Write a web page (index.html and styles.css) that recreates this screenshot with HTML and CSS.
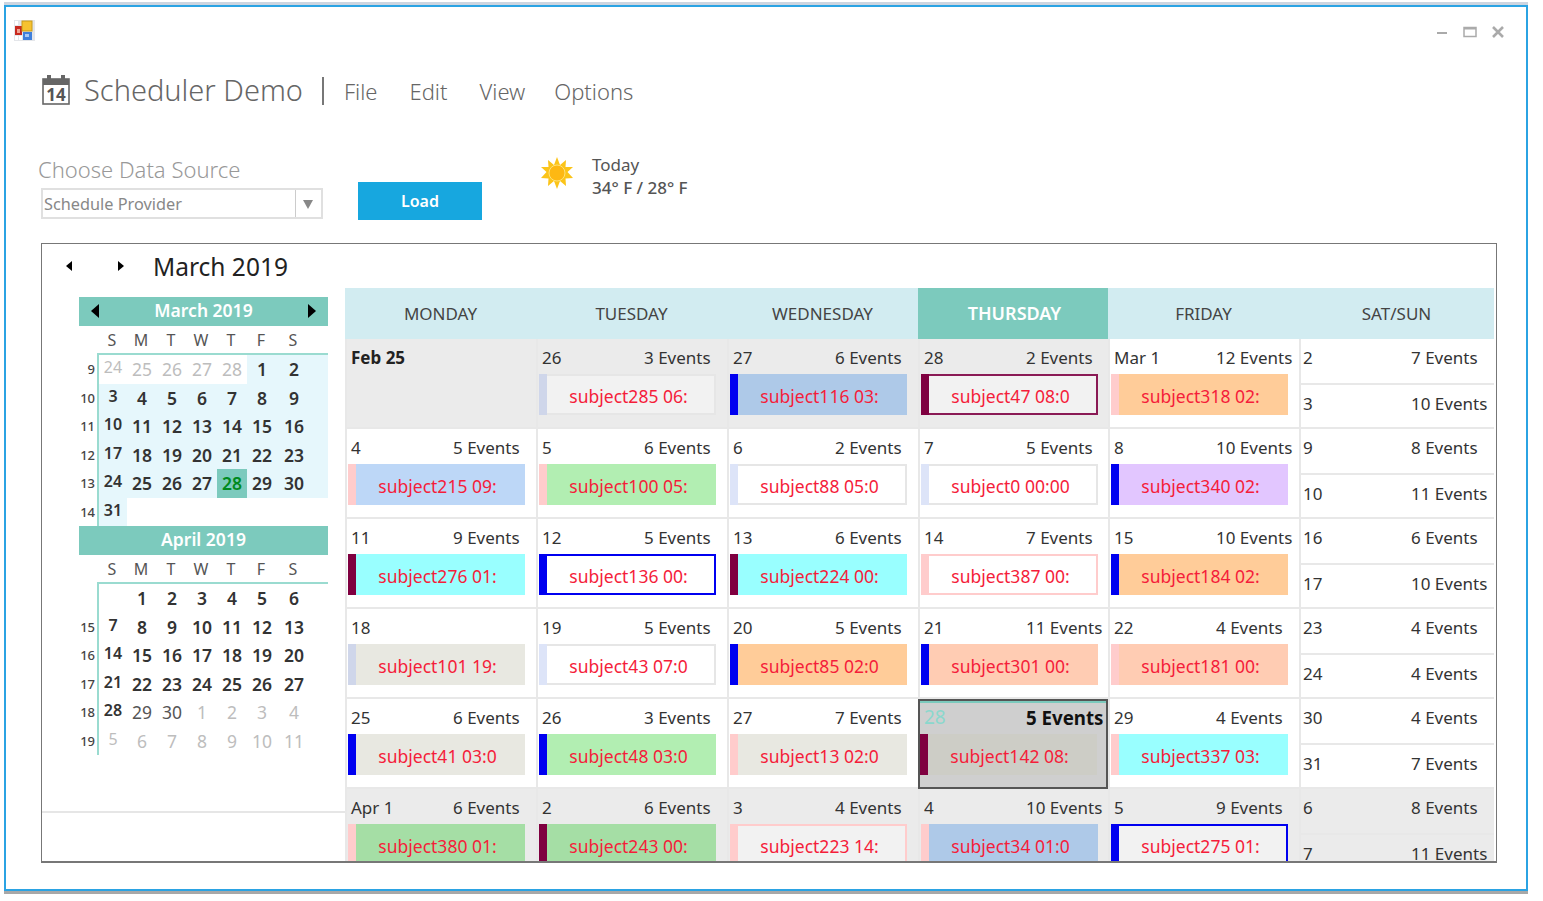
FILE: index.html
```html
<!DOCTYPE html>
<html lang="en">
<head>
  <meta charset="UTF-8" />
  <title>Scheduler Demo</title>
  <link rel="stylesheet" href="styles.css">
</head>
<body>
  <div class="frame">
    <div class="window">
      <div class="titlebar">
        <svg class="app-icon" width="21" height="21" viewBox="0 0 21 21">
          <rect width="21" height="21" fill="#e4e6ea"/>
          <rect x="1" y="6" width="7" height="9" fill="#c8281e"/>
          <rect x="3" y="9" width="3" height="4" fill="#f0a090"/>
          <rect x="8" y="1" width="10" height="10" fill="#f6c230" stroke="#c89a18"/>
          <rect x="9" y="12" width="9" height="8" fill="#3f7fdc"/>
          <rect x="11" y="14" width="4" height="3" fill="#a8c8f4"/>
          <rect x="1" y="16" width="3" height="4" fill="#fff"/>
          <rect x="5" y="16" width="3" height="4" fill="#fff"/>
          <rect x="1" y="1" width="3" height="4" fill="#fff"/>
        </svg>
        <div class="win-controls">
          <svg width="12" height="12" viewBox="0 0 12 12"><rect x="1" y="6" width="10" height="2" fill="#aaa"/></svg>
          <svg width="14" height="12" viewBox="0 0 14 12"><rect x="1" y="1.5" width="12" height="9" fill="none" stroke="#aaa" stroke-width="1.5"/><rect x="1" y="1" width="12" height="2.5" fill="#aaa"/></svg>
          <svg width="12" height="12" viewBox="0 0 12 12"><path d="M1 1 L11 11 M11 1 L1 11" stroke="#aaa" stroke-width="2.6"/></svg>
        </div>
      </div>

      <div class="app-head">
        <svg class="cal-icon" width="28" height="30" viewBox="0 0 28 30">
          <rect x="1" y="4" width="26" height="25" fill="#fff" stroke="#666" stroke-width="1.6"/>
          <rect x="1" y="4" width="26" height="6" fill="#666"/>
          <rect x="5" y="0" width="4" height="7" fill="#666"/>
          <rect x="19" y="0" width="4" height="7" fill="#666"/>
          <text x="14" y="26" text-anchor="middle" class="cal-num">14</text>
        </svg>
        <span class="app-title">Scheduler Demo</span>
        <span class="head-sep"></span>
        <nav class="menu">
          <a>File</a>
          <a>Edit</a>
          <a>View</a>
          <a>Options</a>
        </nav>
      </div>

      <div class="source-row">
        <div class="source">
          <label class="source-label">Choose Data Source</label>
          <div class="combo">
            <span class="combo-text">Schedule Provider</span>
            <span class="combo-arrow"></span>
          </div>
        </div>
        <button class="load">Load</button>
        <svg class="sun" width="32" height="32" viewBox="0 0 32 32">
          <path d="M16 0 L19 8 L25 3 L24.500 10 L32 10 L26.500 15 L32 21 L24.500 21.500 L25 29 L19 24 L16 32 L13 24 L7 29 L7.500 21.500 L0 21 L5.500 15 L0 10 L7.500 10 L7 3 L13 8 Z" fill="#fbc419"/>
          <circle cx="16" cy="16" r="8" fill="#fdb813" stroke="#ffe27a"/>
        </svg>
        <div class="weather">
          <div>Today</div>
          <div class="temps">34° F / 28° F</div>
        </div>
      </div>

      <div class="panel">
        <div class="panel-nav">
          <span class="tri tri-left"></span>
          <span class="tri tri-right"></span>
          <span class="panel-month">March 2019</span>
        </div>
        <div class="panel-body">
          <aside class="sidebar">
            <div class="minis">
              <div class="mini-head">
                <span class="tri tri-left"></span>
                <span>March 2019</span>
                <span class="tri tri-right"></span>
              </div>
              <div class="mini-names"><span>S</span><span>M</span><span>T</span><span>W</span><span>T</span><span>F</span><span>S</span></div>
              <div class="mini-body">
                <div class="weeks"><span>9</span><span>10</span><span>11</span><span>12</span><span>13</span><span>14</span></div>
                <div class="days days-tinted">
                  <span class="other first">24</span><span class="other">25</span><span class="other">26</span><span class="other">27</span><span class="other">28</span><span>1</span><span>2</span><i></i>
                  <span class="first">3</span><span>4</span><span>5</span><span>6</span><span>7</span><span>8</span><span>9</span><i></i>
                  <span class="first">10</span><span>11</span><span>12</span><span>13</span><span>14</span><span>15</span><span>16</span><i></i>
                  <span class="first">17</span><span>18</span><span>19</span><span>20</span><span>21</span><span>22</span><span>23</span><i></i>
                  <span class="first">24</span><span>25</span><span>26</span><span>27</span><span class="today">28</span><span>29</span><span>30</span><i></i>
                  <span class="first">31</span><i class="blank"></i>
                </div>
              </div>

              <div class="mini-head">
                <span>April 2019</span>
              </div>
              <div class="mini-names"><span>S</span><span>M</span><span>T</span><span>W</span><span>T</span><span>F</span><span>S</span></div>
              <div class="mini-body">
                <div class="weeks"><span></span><span>15</span><span>16</span><span>17</span><span>18</span><span>19</span></div>
                <div class="days">
                  <span class="first"></span><span>1</span><span>2</span><span>3</span><span>4</span><span>5</span><span>6</span><i></i>
                  <span class="first">7</span><span>8</span><span>9</span><span>10</span><span>11</span><span>12</span><span>13</span><i></i>
                  <span class="first">14</span><span>15</span><span>16</span><span>17</span><span>18</span><span>19</span><span>20</span><i></i>
                  <span class="first">21</span><span>22</span><span>23</span><span>24</span><span>25</span><span>26</span><span>27</span><i></i>
                  <span class="first">28</span><span class="plain">29</span><span class="plain">30</span><span class="other">1</span><span class="other">2</span><span class="other">3</span><span class="other">4</span><i></i>
                  <span class="other first">5</span><span class="other">6</span><span class="other">7</span><span class="other">8</span><span class="other">9</span><span class="other">10</span><span class="other">11</span><i></i>
                </div>
              </div>
            </div>
            <div class="sidebar-foot"></div>
          </aside>

          <div class="sched">
            <div class="day-head">MONDAY</div>
            <div class="day-head">TUESDAY</div>
            <div class="day-head">WEDNESDAY</div>
            <div class="day-head day-head-now">THURSDAY</div>
            <div class="day-head">FRIDAY</div>
            <div class="day-head">SAT/SUN</div>

            <!-- week 1 -->
            <div class="cell past"><div class="cell-top"><b class="date-strong">Feb 25</b></div></div>
            <div class="cell past"><div class="cell-top"><span class="date">26</span><span>3 Events</span></div><div class="ev ev-blank bd-grey"><i class="st-lav"></i><span>subject285 06:</span></div></div>
            <div class="cell past"><div class="cell-top"><span class="date">27</span><span>6 Events</span></div><div class="ev ev-blue2"><i class="st-blue"></i><span>subject116 03:</span></div></div>
            <div class="cell past"><div class="cell-top"><span class="date">28</span><span>2 Events</span></div><div class="ev ev-blank bd-maroon"><i class="st-maroon"></i><span>subject47 08:0</span></div></div>
            <div class="cell"><div class="cell-top"><span class="date">Mar 1</span><span>12 Events</span></div><div class="ev ev-orange"><i class="st-pink"></i><span>subject318 02:</span></div></div>
            <div class="cell weekend"><div class="half"><span class="date">2</span><span>7 Events</span></div><div class="half"><span class="date">3</span><span>10 Events</span></div></div>

            <!-- week 2 -->
            <div class="cell"><div class="cell-top"><span class="date">4</span><span>5 Events</span></div><div class="ev ev-blue"><i class="st-pink"></i><span>subject215 09:</span></div></div>
            <div class="cell"><div class="cell-top"><span class="date">5</span><span>6 Events</span></div><div class="ev ev-green"><i class="st-pink"></i><span>subject100 05:</span></div></div>
            <div class="cell"><div class="cell-top"><span class="date">6</span><span>2 Events</span></div><div class="ev ev-white bd-grey"><i class="st-lav2"></i><span>subject88 05:0</span></div></div>
            <div class="cell"><div class="cell-top"><span class="date">7</span><span>5 Events</span></div><div class="ev ev-white bd-grey"><i class="st-lav2"></i><span>subject0 00:00</span></div></div>
            <div class="cell"><div class="cell-top"><span class="date">8</span><span>10 Events</span></div><div class="ev ev-purple"><i class="st-blue"></i><span>subject340 02:</span></div></div>
            <div class="cell weekend"><div class="half"><span class="date">9</span><span>8 Events</span></div><div class="half"><span class="date">10</span><span>11 Events</span></div></div>

            <!-- week 3 -->
            <div class="cell"><div class="cell-top"><span class="date">11</span><span>9 Events</span></div><div class="ev ev-cyan"><i class="st-maroon"></i><span>subject276 01:</span></div></div>
            <div class="cell"><div class="cell-top"><span class="date">12</span><span>5 Events</span></div><div class="ev ev-white bd-blue"><i class="st-blue"></i><span>subject136 00:</span></div></div>
            <div class="cell"><div class="cell-top"><span class="date">13</span><span>6 Events</span></div><div class="ev ev-cyan"><i class="st-maroon"></i><span>subject224 00:</span></div></div>
            <div class="cell"><div class="cell-top"><span class="date">14</span><span>7 Events</span></div><div class="ev ev-white bd-pink"><i class="st-pink"></i><span>subject387 00:</span></div></div>
            <div class="cell"><div class="cell-top"><span class="date">15</span><span>10 Events</span></div><div class="ev ev-orange"><i class="st-blue"></i><span>subject184 02:</span></div></div>
            <div class="cell weekend"><div class="half"><span class="date">16</span><span>6 Events</span></div><div class="half"><span class="date">17</span><span>10 Events</span></div></div>

            <!-- week 4 -->
            <div class="cell"><div class="cell-top"><span class="date">18</span></div><div class="ev ev-beige"><i class="st-lav"></i><span>subject101 19:</span></div></div>
            <div class="cell"><div class="cell-top"><span class="date">19</span><span>5 Events</span></div><div class="ev ev-white bd-grey"><i class="st-lav2"></i><span>subject43 07:0</span></div></div>
            <div class="cell"><div class="cell-top"><span class="date">20</span><span>5 Events</span></div><div class="ev ev-orange"><i class="st-blue"></i><span>subject85 02:0</span></div></div>
            <div class="cell"><div class="cell-top"><span class="date">21</span><span>11 Events</span></div><div class="ev ev-salmon"><i class="st-blue"></i><span>subject301 00:</span></div></div>
            <div class="cell"><div class="cell-top"><span class="date">22</span><span>4 Events</span></div><div class="ev ev-salmon"><i class="st-pink"></i><span>subject181 00:</span></div></div>
            <div class="cell weekend"><div class="half"><span class="date">23</span><span>4 Events</span></div><div class="half"><span class="date">24</span><span>4 Events</span></div></div>

            <!-- week 5 -->
            <div class="cell"><div class="cell-top"><span class="date">25</span><span>6 Events</span></div><div class="ev ev-beige"><i class="st-blue"></i><span>subject41 03:0</span></div></div>
            <div class="cell"><div class="cell-top"><span class="date">26</span><span>3 Events</span></div><div class="ev ev-green"><i class="st-blue"></i><span>subject48 03:0</span></div></div>
            <div class="cell"><div class="cell-top"><span class="date">27</span><span>7 Events</span></div><div class="ev ev-beige"><i class="st-pink"></i><span>subject13 02:0</span></div></div>
            <div class="cell now"><div class="cell-top"><span class="date">28</span><b>5 Events</b></div><div class="ev ev-beige2"><i class="st-maroon"></i><span>subject142 08:</span></div></div>
            <div class="cell"><div class="cell-top"><span class="date">29</span><span>4 Events</span></div><div class="ev ev-cyan"><i class="st-pink"></i><span>subject337 03:</span></div></div>
            <div class="cell weekend"><div class="half"><span class="date">30</span><span>4 Events</span></div><div class="half"><span class="date">31</span><span>7 Events</span></div></div>

            <!-- week 6, cut off by the panel -->
            <div class="cell past"><div class="cell-top"><span class="date">Apr 1</span><span>6 Events</span></div><div class="ev ev-green2"><i class="st-pink"></i><span>subject380 01:</span></div></div>
            <div class="cell past"><div class="cell-top"><span class="date">2</span><span>6 Events</span></div><div class="ev ev-green2"><i class="st-maroon"></i><span>subject243 00:</span></div></div>
            <div class="cell past"><div class="cell-top"><span class="date">3</span><span>4 Events</span></div><div class="ev ev-blank bd-pink"><i class="st-pink"></i><span>subject223 14:</span></div></div>
            <div class="cell past"><div class="cell-top"><span class="date">4</span><span>10 Events</span></div><div class="ev ev-blue2"><i class="st-pink"></i><span>subject34 01:0</span></div></div>
            <div class="cell past"><div class="cell-top"><span class="date">5</span><span>9 Events</span></div><div class="ev ev-blank bd-blue"><i class="st-blue"></i><span>subject275 01:</span></div></div>
            <div class="cell weekend past"><div class="half"><span class="date">6</span><span>8 Events</span></div><div class="half"><span class="date">7</span><span>11 Events</span></div></div>
          </div>
        </div>
      </div>
    </div>
  </div>
</body>
</html>
```

FILE: styles.css
```css
* {
  box-sizing: border-box;
  margin: 0;
  padding: 0;
}

body {
  background: #fff;
  font-family: "Noto Sans", "Open Sans", sans-serif;
  color: #333;
  overflow: hidden;
}

.frame {
  width: 1524px;
  height: 892px;
  margin: 2px 0 0 4px;
  border-top: 3px solid #cdd5e0;
  border-bottom: 3px solid #a8a8a8;
}

.window {
  height: 886px;
  border: 2px solid #2ba3e3;
  background: #fff;
}

/* title bar */
.titlebar {
  height: 45px;
  display: flex;
  justify-content: space-between;
  padding: 13px 22px 0 8px;
}

.win-controls {
  display: flex;
  gap: 15px;
  padding-top: 6px;
}

.app-head {
  display: flex;
  align-items: center;
  height: 40px;
  margin-top: 18px;
  padding-left: 36px;
}

.cal-icon {
  margin-right: 14px;
}

.cal-num {
  font-size: 17px;
  font-weight: 700;
  fill: #555;
}

.app-title {
  font-size: 29px;
  font-weight: 300;
  color: #666;
  margin-top: -2px;
}

.head-sep {
  width: 2px;
  height: 28px;
  background: #777;
  margin: 2px 20px 0 19px;
}

.menu {
  display: flex;
  gap: 32px;
  padding-top: 1px;
  font-size: 22px;
  font-weight: 300;
  color: #666;
}

.menu a:last-child {
  margin-left: -3px;
}

/* data source row */
.source-row {
  display: flex;
  height: 133px;
  padding-left: 32px;
}

.source {
  width: 285px;
  padding-top: 44px;
}

.source-label {
  display: block;
  font-size: 22px;
  font-weight: 300;
  color: #999;
  height: 34px;
  line-height: 30px;
}

.combo {
  display: flex;
  justify-content: space-between;
  margin-left: 3px;
  width: 282px;
  height: 31px;
  border: 2px solid #e0e0e0;
}

.combo-text {
  font-size: 16.300px;
  color: #888;
  line-height: 28px;
  padding-left: 1px;
}

.combo-arrow {
  width: 26px;
  border-left: 1px solid #ccc;
  position: relative;
}

.combo-arrow::after {
  content: "";
  position: absolute;
  left: 7px;
  top: 10px;
  border: 5.500px solid transparent;
  border-top: 9px solid #888;
  border-bottom: 0;
}

.load {
  width: 124px;
  height: 38px;
  margin: 72px 0 0 35px;
  border: none;
  background: #17a7df;
  color: #fff;
  font-family: inherit;
  font-size: 16px;
  font-weight: 600;
}

.sun {
  margin: 47px 0 0 59px;
}

.weather {
  margin: 43px 0 0 19px;
  font-size: 17px;
  line-height: 23px;
  color: #555;
}

.temps {
  font-weight: 500;
}

/* main panel */
.panel {
  width: 1456px;
  height: 620px;
  margin-left: 35px;
  border: 2px solid #777;
  border-width: 1px 1px 2px 1px;
  display: flex;
  flex-direction: column;
  overflow: hidden;
}

.panel-nav {
  height: 44px;
  flex: none;
  display: flex;
  align-items: center;
  padding-left: 24px;
}

.tri {
  display: inline-block;
  border: 5px solid transparent;
  border-left-width: 0;
  border-right: 6px solid #000;
}

.tri-right {
  border-right-width: 0;
  border-left: 6px solid #000;
}

.panel-nav .tri-right {
  margin-left: 46px;
}

.panel-month {
  margin-left: 29px;
  font-size: 24.500px;
  color: #222;
}

.panel-body {
  flex: 1;
  display: flex;
  min-height: 0;
}

/* mini calendars */
.sidebar {
  width: 303px;
  flex: none;
  display: flex;
  flex-direction: column;
  justify-content: space-between;
  padding-top: 9px;
}

.minis {
  padding-left: 37px;
  width: 286px;
}

.sidebar-foot {
  height: 50px;
  border-top: 2px solid #e6e6e6;
}

.mini-head {
  height: 29px;
  padding-bottom: 3px;
  background: #7ccabd;
  color: #fff;
  font-size: 17.500px;
  font-weight: 600;
  display: flex;
  align-items: center;
  justify-content: center;
  position: relative;
}

.mini-head .tri-left,
.mini-head .tri-right {
  position: absolute;
  top: 7px;
  border-width: 7px 0 7px 8px;
}

.mini-head .tri-left {
  left: 12px;
  border-width: 7px 8px 7px 0;
}

.mini-head .tri-right {
  right: 12px;
}

.mini-names {
  height: 27px;
  padding-left: 19px;
  display: grid;
  grid-template-columns: 28px repeat(5, 30px) 34px;
  align-items: center;
  text-align: center;
  font-size: 16px;
  color: #555;
}

.mini-body {
  display: flex;
}

.weeks {
  width: 18px;
  padding-top: 2px;
  display: grid;
  grid-auto-rows: 28.500px;
  font-size: 13px;
  font-weight: 500;
  text-align: right;
  padding-right: 2px;
  color: #444;
}

.weeks span {
  line-height: 29px;
}

.days {
  width: 231px;
  border-top: 2px solid #9adbd0;
  border-left: 2px solid #9adbd0;
  display: grid;
  grid-template-columns: 28px repeat(5, 30px) 34px 1fr;
  grid-auto-rows: 28.500px;
  font-size: 17.500px;
  font-weight: 600;
  color: #333;
  text-align: center;
  line-height: 28px;
}

.days-tinted {
  background: #e6f7fc;
}

.days .other {
  font-weight: 400;
  color: #bdbdbd;
}

.days-tinted .other {
  background: #fff;
}

.days .plain {
  font-weight: 400;
  color: #555;
}

.days .first {
  line-height: 25px;
  font-size: 16px;
}

.days .today {
  background: #7ccabd;
  color: #008a1e;
}

.days .blank {
  grid-column: 2 / -1;
  background: #fff;
}

/* scheduler grid */
.sched {
  flex: 1;
  display: grid;
  grid-template-columns: 191px 191px 191px 190px 191px 195px;
  grid-template-rows: 51px repeat(6, 90px);
  min-width: 0;
}

.day-head {
  background: #d2ecf1;
  text-align: center;
  line-height: 51px;
  font-size: 17px;
  color: #444;
}

.day-head-now {
  background: #7ccabd;
  color: #fff;
  padding-left: 3px;
  font-size: 18px;
  font-weight: 600;
}

.cell {
  border-left: 2px solid #e8e8e8;
  border-bottom: 2px solid #e8e8e8;
  padding: 0 1px;
  font-size: 17px;
  line-height: 37px;
  color: #333;
}

.cell.past {
  background: #ebebeb;
}

.cell-top {
  height: 35px;
  display: flex;
  padding-left: 3px;
}

.date {
  width: 102px;
  flex: none;
}

.date-strong {
  color: #222;
}

.cell-top b {
  white-space: nowrap;
}

.now {
  background: #cfcfcf;
  border: 2px solid #555;
  box-shadow: inset 0 2px 0 #7ccabd;
}

.now .date {
  color: #8ad8cd;
  font-size: 19px;
}

.now .cell-top {
  margin-top: -2px;
}

.now .ev {
  margin-left: -1px;
}

.now .cell-top b {
  color: #111;
  font-size: 18.700px;
}

.weekend {
  padding: 0;
}

.half {
  height: 44px;
  display: flex;
  padding-left: 2px;
  line-height: 37px;
}

.half + .half {
  border-top: 2px solid #e8e8e8;
  line-height: 38px;
}

.weekend .date {
  width: 108px;
}

.ev {
  width: 177px;
  height: 41px;
  display: flex;
  font-size: 17.500px;
  line-height: 44px;
  color: #f51d3a;
  overflow: hidden;
  white-space: nowrap;
}

.ev i {
  width: 8px;
  flex: none;
}

.ev span {
  flex: 1;
  padding-right: 6px;
  text-align: center;
}

.ev-blank { background: #f2f2f2; }
.ev-white { background: #fff; }
.ev-blue { background: #bdd7f7; }
.ev-blue2 { background: #aec9e8; }
.ev-green { background: #b2eeb2; }
.ev-green2 { background: #a5dea5; }
.ev-orange { background: #ffcc99; }
.ev-salmon { background: #ffccb3; }
.ev-purple { background: #e2c6ff; }
.ev-cyan { background: #99ffff; }
.ev-beige { background: #e8e8e1; }
.ev-beige2 { background: #cdcdc6; }

.bd-grey { box-shadow: inset 0 0 0 2px #e6e6e6; }
.bd-blue { box-shadow: inset 0 0 0 2px #0000f0; }
.bd-maroon { box-shadow: inset 0 0 0 2px #8a1a55; }
.bd-pink { box-shadow: inset 0 0 0 2px #ffcccc; }

.st-lav { background: #cfd6ea; }
.st-lav2 { background: #dde4f8; }
.st-pink { background: #ffcccc; }
.st-blue { background: #0000f0; }
.st-maroon { background: #7f0040; }
```
